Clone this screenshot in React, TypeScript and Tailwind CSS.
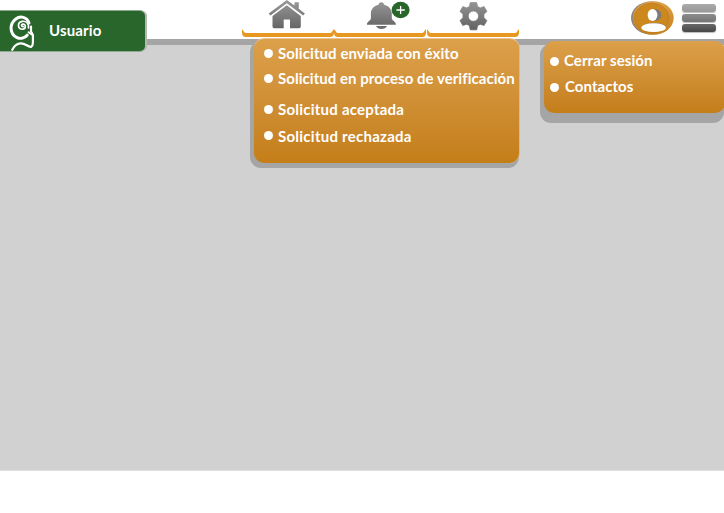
import type { ReactNode } from 'react';

function Bracket() {
  return (
    <svg className="block h-[8px] w-full overflow-visible" viewBox="0 0 92 8" preserveAspectRatio="none">
      <path d="M0 .2C1.8 1.4 1.6 4 4.8 4H87.2C90.4 4 90.2 1.4 92 .2V3.5C92 6.6 90.6 8 88 8H4C1.4 8 0 6.6 0 3.5Z" fill="#e79820" />
    </svg>
  );
}

function Tab({ children, label }: { children: ReactNode; label: string }) {
  return (
    <button aria-label={label} className="flex h-[37px] w-[92px] flex-col justify-between">
      <span className="flex h-[29px] w-full">{children}</span>
      <Bracket />
    </button>
  );
}

function IconGradient({ id }: { id: string }) {
  return (
    <defs>
      <linearGradient id={id} x1="0" y1="0" x2="0" y2="30" gradientUnits="userSpaceOnUse">
        <stop stopColor="#999" />
        <stop offset="1" stopColor="#626262" />
      </linearGradient>
    </defs>
  );
}

function HomeIcon() {
  return (
    <svg className="h-[30px] w-[92px] shrink-0 overflow-visible" viewBox="0 0 92 30">
      <IconGradient id="home" />
      <g fill="url(#home)">
        <path d="M44.8 0 26.7 13.4l1.7 2.2L44.8 3.3 61.2 15.6l1.7-2.2-6.1-4.6V2.2h-4.3v3.4Z" />
        <path d="M44.8 5.3 30.5 16v10.5Q30.5 28.2 32.2 28.2H41.7V19.6H48V28.2H57.1Q58.8 28.2 58.8 26.5V16Z" />
      </g>
    </svg>
  );
}

function BellIcon() {
  return (
    <svg className="h-[30px] w-[92px] shrink-0 overflow-visible" viewBox="0 0 92 30">
      <IconGradient id="bell" />
      <path d="M47.3 2.3c-1.6 0-2.7 1.2-2.7 2.5-4.8 1-7.7 4.4-7.7 9v4.7c0 1.4-3.9 3.8-3.9 5.2v1h28.8v-1c0-1.4-4-3.8-4-5.2v-4.7c0-4.6-3-8-7.8-9 0-1.3-1.1-2.5-2.7-2.5Z" fill="url(#bell)" />
      <path d="M42 26H53Q51.5 29 47.5 29T42 26Z" fill="#6d6d6d" />
      <ellipse cx="66.6" cy="10" rx="9" ry="8.2" fill="#28662b" />
      <path d="M62.4 10H70.8M66.6 6V14" stroke="white" strokeWidth="1.3" />
    </svg>
  );
}

function GearIcon() {
  return (
    <svg className="h-[30px] w-[92px] shrink-0 overflow-visible" viewBox="-0.4 0 92 30">
      <IconGradient id="gear" />
      <path fillRule="evenodd" fill="url(#gear)" stroke="url(#gear)" strokeWidth=".8" strokeLinejoin="round" d="M42.9 2.5h6.4l.8 3.9 2.6 1.5 4-1.3 2.8 4.9-3 2.8v3.5l3 2.7-2.8 4.9-4-1.2-2.6 1.5-.8 4.1h-6.4l-.9-4.1-2.6-1.5-4 1.2-2.8-4.9 3-2.7v-3.5l-3-2.8 2.8-4.9 4 1.3L42 6.4ZM46 10.9a5.2 5.2 0 1 0 0 10.4 5.2 5.2 0 0 0 0-10.4Z" />
    </svg>
  );
}

function Avatar() {
  return (
    <svg className="h-[36px] w-[44px]" viewBox="0 0 44 36">
      <defs>
        <linearGradient id="avatar" x2="0" y2="1">
          <stop stopColor="#dda049" />
          <stop offset="1" stopColor="#c6801a" />
        </linearGradient>
      </defs>
      <ellipse cx="21" cy="18" rx="20" ry="16.6" fill="#858585" />
      <ellipse cx="23.2" cy="18" rx="20.5" ry="16.8" fill="url(#avatar)" />
      <ellipse cx="21.8" cy="18" rx="17.2" ry="14.7" fill="#cc871d" stroke="#b87c24" strokeWidth=".7" />
      <ellipse cx="26" cy="15" rx="5.3" ry="5.8" fill="#7b7b7b" />
      <ellipse cx="22.5" cy="15" rx="4.9" ry="6.1" fill="white" />
      <path d="M12 27C16 21.5 33 21.5 36 27L34 29Z" fill="#7b7b7b" />
      <ellipse cx="23.6" cy="27.7" rx="12.2" ry="4.4" fill="white" />
    </svg>
  );
}

function Logo() {
  return (
    <svg className="ml-[8px] h-[40px] w-[30px]" viewBox="8 11 30 40" fill="none" stroke="white" strokeLinecap="round">
      <path d="M23.3 26.5C21.2 26.8 20.8 24.2 23 24.1C26 24 26.2 28.7 22.8 29.2C17.5 30 16.8 22 22.3 21.3C26.8 20.8 29 24 28.5 28" strokeWidth="1.7" />
      <path d="M29 23C27 17 20.5 15.3 15.5 19.2C9 24.3 9.8 34.3 17 37.6C20.7 39.2 24.8 38 27.2 35.2" strokeWidth="3" />
      <path d="M31 26.5V31.5L32.9 35V40.5C33 43.5 32.8 46.3 31 47C27 46.5 25.5 43.2 20.7 43.4C16.8 43.6 14.4 45.4 12.3 49.8" strokeWidth="2.2" />
      <path d="M28.5 32.2 31.7 34.5" strokeWidth="1.8" />
    </svg>
  );
}

function MenuItem({ children, className, textClass }: { children: ReactNode; className: string; textClass: string }) {
  return (
    <li className={`flex items-center whitespace-nowrap ${className}`}>
      <span className="h-[9px] w-[9px] shrink-0 rounded-full bg-white" />
      <span className={textClass}>{children}</span>
    </li>
  );
}

export default function App() {
  return (
    <div className="relative h-[513px] w-[724px] overflow-hidden bg-white font-['Lato','Liberation_Sans',sans-serif] text-[15px] leading-[20px] font-bold text-white">
      <header className="flex h-[39px] justify-between pl-[242px]">
        <nav className="flex">
          <Tab label="Inicio"><HomeIcon /></Tab>
          <Tab label="Notificaciones"><BellIcon /></Tab>
          <div className="ml-px"><Tab label="Ajustes"><GearIcon /></Tab></div>
        </nav>
        <div className="flex pr-[8px]">
          <Avatar />
          <button aria-label="Menú" className="ml-[8px] flex h-[31px] w-[34px] flex-col gap-[2px] pt-[4px]">
            <span className="h-[8px] w-full shrink-0 rounded-[3px] bg-linear-to-b from-[#aaa] to-[#999] shadow-[0_1px_1px_#bbb]" />
            <span className="h-[8px] w-full shrink-0 rounded-[3px] bg-linear-to-b from-[#8c8c8c] to-[#747474] shadow-[0_1px_1px_#bbb]" />
            <span className="h-[8px] w-full shrink-0 rounded-[3px] bg-linear-to-b from-[#686868] to-[#484848] shadow-[0_1px_1px_#bbb]" />
          </button>
        </div>
      </header>
      <main className="h-[432px] border-t-[6px] border-b border-t-[#a5a5a5] border-b-[#e0e0e0] bg-[#d1d1d1]" />

      <div className="absolute top-[11px] left-0 flex h-[40px] w-[145px] items-center rounded-r-[5px] bg-[#28662b] shadow-[2px_0_0_#b5b5b5,0_0_0_1px_#8eaa8e]">
        <Logo />
        <span className="ml-[11px] pb-[2px] tracking-[0.15px]">Usuario</span>
      </div>

      <div className="absolute top-[41px] left-[250px] h-[127px] w-[269px] rounded-[11px] bg-[#a5a5a5]" />
      <ul className="absolute top-[38px] left-[254px] h-[125px] w-[266px] rounded-[10px] border-t border-r border-t-[#eac591] border-r-[#dfba83] bg-linear-to-b from-[#dca04a] to-[#c47e18] pt-[4px] pl-[10px]">
        <MenuItem className="h-[20px]" textClass="ml-[5px] tracking-[0.08px]">Solicitud enviada con éxito</MenuItem>
        <MenuItem className="mt-[5px] h-[20px]" textClass="ml-[5px] tracking-[0.04px]">Solicitud en proceso de verificación</MenuItem>
        <MenuItem className="mt-[11px] h-[20px]" textClass="ml-[5px] tracking-[0.23px]">Solicitud aceptada</MenuItem>
        <MenuItem className="mt-[6px] h-[20px]" textClass="ml-[5px] pt-[2px] tracking-[0.25px]">Solicitud rechazada</MenuItem>
      </ul>

      <div className="absolute top-[44px] left-[540px] h-[79px] w-[184px] rounded-[11px] bg-[#a5a5a5]" />
      <ul className="absolute top-[41px] left-[544px] h-[72px] w-[181px] rounded-[10px] bg-linear-to-b from-[#dca04a] to-[#c47e18] pt-[10px] pl-[6px]">
        <MenuItem className="h-[20px]" textClass="ml-[5px] pb-[2px] tracking-[0.08px]">Cerrar sesión</MenuItem>
        <MenuItem className="mt-[6px] h-[20px]" textClass="ml-[6px] pb-[3px] tracking-[0.05px]">Contactos</MenuItem>
      </ul>
    </div>
  );
}
